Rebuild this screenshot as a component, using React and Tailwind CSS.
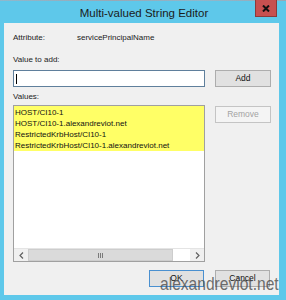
import React from "react";

const ui = { fontFamily: '"Liberation Sans", Arial, sans-serif' };

function Button({ label, disabled, focused, className = "" }) {
  let look = "bg-[#e1e1e1] border-[#adadad] text-[#111]";
  if (disabled) look = "bg-[#f4f4f4] border-[#c4c4c4] text-[#a3a3a3]";
  if (focused) look = "bg-[#e1e1e1] border-[#4a90d0] text-[#111]";
  return (
    <div
      className={`h-[17px] border flex items-center justify-center text-[8.5px] ${look} ${className}`}
    >
      {label}
    </div>
  );
}

export default function App() {
  const values = [
    "HOST/CI10-1",
    "HOST/CI10-1.alexandreviot.net",
    "RestrictedKrbHost/CI10-1",
    "RestrictedKrbHost/CI10-1.alexandreviot.net",
  ];

  return (
    <div className="relative w-[286px] h-[300px] bg-[#5ec8ea] overflow-hidden" style={ui}>
      {/* bits of the window behind */}
      <div className="h-[1px] bg-[linear-gradient(90deg,#8fb8cc_0,#9aa7b4_40%,#8fb8cc_70%,#9aa7b4_100%)]" />

      {/* title bar */}
      <div className="h-[22px] flex items-center justify-center pl-[2px]">
        <span className="text-[11.5px] text-[#1b1b1b] mt-[3px]">Multi-valued String Editor</span>
      </div>
      <div className="absolute left-[255px] top-0 w-[22px] h-[17px] bg-[#c75050] border border-[#8c3a3a] border-t-0 flex items-center justify-center">
        <svg width="8" height="7" viewBox="0 0 8 7">
          <path d="M1 0.5 L7 6.5 M7 0.5 L1 6.5" stroke="#111" strokeWidth="2" />
        </svg>
      </div>

      {/* client area */}
      <div className="ml-[4px] w-[275px] h-[272px] bg-[#f0f0f0] pl-[9px] flex flex-col">
        <div className="flex items-center h-[10px] mt-[10px] text-[8px] text-[#1b1b1b]">
          <span className="w-[64px]">Attribute:</span>
          <span>servicePrincipalName</span>
        </div>

        <div className="mt-[12px] h-[10px] text-[8px] text-[#1b1b1b] flex items-center">Value to add:</div>

        <div className="mt-[5px] flex">
          <div className="w-[192px] h-[17px] bg-white border border-[#5f7f9c] flex items-center pl-[2px]">
            <div className="w-[1px] h-[10px] bg-black" />
          </div>
          <Button label="Add" className="ml-[10px] w-[56px]" />
        </div>

        <div className="mt-[5px] h-[10px] text-[8px] text-[#1b1b1b] flex items-center">Values:</div>

        <div className="mt-[3px] flex items-start">
          <div className="w-[192px] h-[157px] bg-white border border-[#a0a0a0] flex flex-col">
            <div className="bg-[#ffff66] text-[8px] text-[#111] leading-[11px] pl-[1px] pt-[1px]">
              {values.map((v) => (
                <div key={v} className="h-[11px] whitespace-nowrap">{v}</div>
              ))}
            </div>
            <div className="flex-1" />
            {/* horizontal scrollbar */}
            <div className="h-[13px] flex bg-[#f0f0f0] border-t border-[#e4e4e4]">
              <div className="w-[14px] flex items-center justify-center">
                <svg width="5" height="7" viewBox="0 0 5 7">
                  <path d="M4 0.5 L1 3.5 L4 6.5" stroke="#606060" fill="none" strokeWidth="1.2" />
                </svg>
              </div>
              <div className="w-[145px] bg-[#dadada] border border-[#cdcdcd] flex items-center justify-center">
                <svg width="6" height="5" viewBox="0 0 6 5">
                  <path d="M0.5 0 V5 M2.5 0 V5 M4.5 0 V5" stroke="#7a7a7a" strokeWidth="1" />
                </svg>
              </div>
              <div className="w-[17px] bg-white" />
              <div className="flex-1 flex items-center justify-center">
                <svg width="5" height="7" viewBox="0 0 5 7">
                  <path d="M1 0.5 L4 3.5 L1 6.5" stroke="#606060" fill="none" strokeWidth="1.2" />
                </svg>
              </div>
            </div>
          </div>
          <Button label="Remove" disabled className="ml-[10px] mt-[1px] w-[56px]" />
        </div>

        <div className="mt-[8px] flex">
          <Button label="OK" focused className="ml-[136px] w-[55px]" />
          <Button label="Cancel" className="ml-[11px] w-[55px]" />
        </div>
      </div>

      {/* watermark */}
      <div className="absolute left-[160px] top-[274px] text-[19px] leading-[20px] text-[#4a4a4a]/80 scale-x-[0.82] origin-left whitespace-nowrap">
        alexandreviot.net
      </div>
    </div>
  );
}
